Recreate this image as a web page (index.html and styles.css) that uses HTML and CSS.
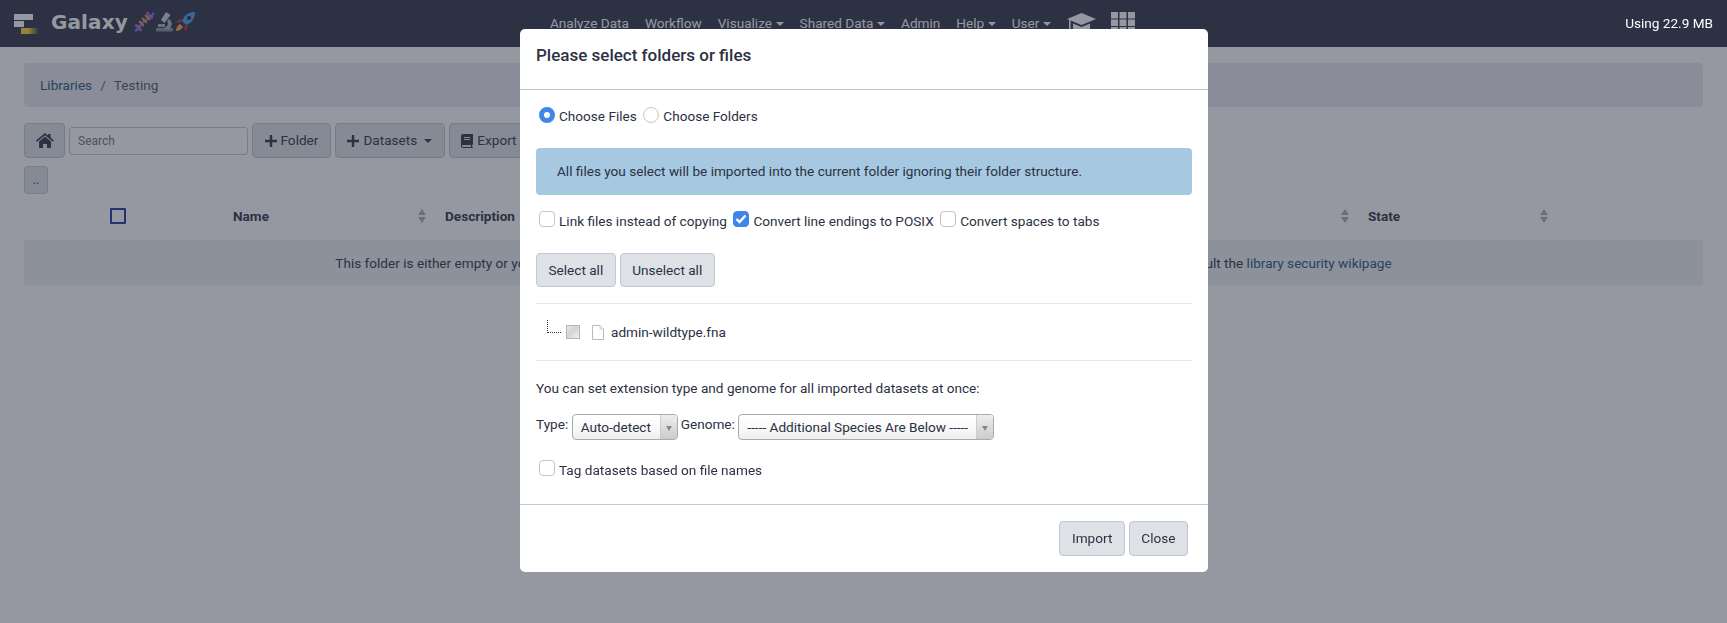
FILE: index.html
```html
<!DOCTYPE html>
<html lang="en">
<head>
<meta charset="utf-8">
<title>Galaxy</title>
<link rel="stylesheet" href="styles.css">
</head>
<body>
<header class="navbar">
  <a class="brand">
    <svg class="logo" width="26" height="22" viewBox="0 0 26 22"><rect x="0" y="0" width="19" height="6" fill="#fff"/><rect x="0" y="7" width="10" height="6" fill="#fff"/><defs><linearGradient id="gold"><stop offset="0.4" stop-color="#ffd52e"/><stop offset="1" stop-color="#ffd52e" stop-opacity="0"/></linearGradient></defs><rect x="7" y="14" width="18" height="6" fill="url(#gold)"/></svg>
    <span class="brand-name">Galaxy</span>
    <span class="emojis">
      <svg width="21" height="21" viewBox="0 0 21 21"><path d="M1 20C5 18 6 14 9 11s8-4 11-9" fill="none" stroke="#4f7fe0" stroke-width="2.6"/><path d="M1 14c3 1 5 3 6 6M13 1c1 3 3 5 6 6" fill="none" stroke="#b45fd6" stroke-width="2.600"/><path d="M5 10l5 5M8 7l5 5M11 4l5 5" stroke="#f0903a" stroke-width="1.800"/></svg>
      <svg width="20" height="21" viewBox="0 0 20 21"><rect x="1" y="17" width="17" height="3.500" rx="1" fill="#7f929e"/><path d="M11 1l4.500 3-6 8-3.500-3z" fill="#c6d3da"/><path d="M14 8a6 6 0 0 1 0 10H8l3-2a4 4 0 0 0 1-6z" fill="#a3b4be"/><rect x="3" y="13" width="7" height="3" fill="#a3b4be"/></svg>
      <svg width="21" height="21" viewBox="0 0 21 21"><path d="M20 1c-6 0-11 3-13 9l4 4c6-2 9-7 9-13z" fill="#4a9be6"/><circle cx="14" cy="7" r="2" fill="#16222e"/><path d="M7 8L3 9l-2 3 5-1zM13 14l-1 4-3 2 1-5z" fill="#e0243c"/><path d="M5 13l3 3c-1 2-4 4-7 4 0-3 2-6 4-7z" fill="#f7ab3a"/></svg>
    </span>
  </a>
  <nav class="nav-links">
    <a>Analyze Data</a>
    <a>Workflow</a>
    <a class="caret">Visualize</a>
    <a class="caret">Shared Data</a>
    <a>Admin</a>
    <a class="caret">Help</a>
    <a class="caret">User</a>
    <svg class="cap" width="29" height="24" viewBox="0 0 29 24"><path d="M14.500 1L29 7l-14.500 6L0 7z" fill="#fff"/><path d="M6 11.500l8.500 3.500 8.500-3.500V20c-3 3-14 3-17 0z" fill="#fff"/><rect x="2" y="8" width="1.600" height="12" fill="#fff"/></svg>
    <svg class="grid-icon" width="24" height="24" viewBox="0 0 24 24"><g fill="#fff"><rect width="7" height="6.500" x="0" y="0"/><rect width="7" height="6.500" x="8.500" y="0"/><rect width="7" height="6.500" x="17" y="0"/><rect width="7" height="6.500" x="0" y="7.500"/><rect width="7" height="6.500" x="8.500" y="7.500"/><rect width="7" height="6.500" x="17" y="7.500"/><rect width="7" height="6.500" x="0" y="15"/><rect width="7" height="6.500" x="8.500" y="15"/><rect width="7" height="6.500" x="17" y="15"/></g></svg>
  </nav>
  <span class="quota">Using 22.9 MB</span>
</header>

<main class="page">
  <div class="crumbs"><a class="link">Libraries</a><span class="sep">/</span><span class="crumb-now">Testing</span></div>
  <div class="toolbar">
    <button class="btn btn-home"><svg width="18" height="15" viewBox="0 0 18 15"><path d="M9 0l3 2.500V1h2.500v3.600L18 7.500l-1 1.200L9 2.200 1 8.700 0 7.500z" fill="#2c3143"/><path d="M9 3.500l6 4.900V14a1 1 0 0 1-1 1h-3v-4H7v4H4a1 1 0 0 1-1-1V8.400z" fill="#2c3143"/></svg></button>
    <input class="search" type="text" placeholder="Search">
    <button class="btn"><svg class="plus" width="12" height="12" viewBox="0 0 12 12"><path d="M4.800 0h2.400v4.800H12v2.400H7.200V12H4.800V7.200H0V4.800h4.800z" fill="#2c3143"/></svg>Folder</button>
    <button class="btn"><svg class="plus" width="12" height="12" viewBox="0 0 12 12"><path d="M4.800 0h2.400v4.800H12v2.400H7.200V12H4.800V7.200H0V4.800h4.800z" fill="#2c3143"/></svg>Datasets<i class="tri"></i></button>
    <button class="btn"><svg class="book" width="12" height="14" viewBox="0 0 12 14"><path d="M2 0h10v10.500l-.8.400v2.200l.8.400V14H2a2 2 0 0 1-2-2V2a2 2 0 0 1 2-2zm1 3v1h6V3zm0 2v1h6V5zm-1 6a1 1 0 0 0 0 2h8v-2z" fill="#2c3143"/></svg>Export</button>
  </div>
  <button class="btn btn-up">..</button>
  <div class="thead">
    <div class="th th-check"><span class="head-box"></span></div>
    <div class="th">Name<i class="sort"></i></div>
    <div class="th">Description<i class="sort"></i></div>
    <div class="th">Data Type<i class="sort"></i></div>
    <div class="th">Size<i class="sort"></i></div>
    <div class="th">Time Updated (UTC)<i class="sort"></i></div>
    <div class="th th-last">State<i class="sort"></i></div>
  </div>
  <div class="empty-row">This folder is either empty or you do not have the proper access permissions to see all the contents. If you expected something else, please consult the <a class="link">library security wikipage</a></div>
</main>

<div class="backdrop"></div>

<section class="modal">
  <header class="modal-head"><h5 class="modal-title">Please select folders or files</h5></header>
  <div class="modal-body">
    <div class="opt-row row-radio">
      <label class="opt"><span class="radio radio-on"></span>Choose Files</label>
      <label class="opt"><span class="radio"></span>Choose Folders</label>
    </div>
    <div class="alert">All files you select will be imported into the current folder ignoring their folder structure.</div>
    <div class="opt-row row-checks">
      <label class="opt"><span class="check"></span>Link files instead of copying</label>
      <label class="opt"><span class="check check-on"><svg width="12" height="10" viewBox="0 0 12 10"><path d="M1.500 5l3 3 6-6.500" fill="none" stroke="#fff" stroke-width="2.400"/></svg></span>Convert line endings to POSIX</label>
      <label class="opt"><span class="check"></span>Convert spaces to tabs</label>
    </div>
    <div class="select-btns">
      <button class="btn btn-lg">Select all</button>
      <button class="btn btn-lg">Unselect all</button>
    </div>
    <div class="tree">
      <span class="tree-line"></span>
      <span class="tree-check"></span>
      <svg class="file" width="12" height="15" viewBox="0 0 12 15"><path d="M.5.5h7.500l3.500 3.500v10.500H.5z" fill="#fff" stroke="#bbb"/><path d="M8 .5V4h3.500" fill="#eee" stroke="#ccc"/></svg>
      <span>admin-wildtype.fna</span>
    </div>
    <p class="hint">You can set extension type and genome for all imported datasets at once:</p>
    <div class="selects">
      <span class="sel-label">Type:</span>
      <div class="sel sel-type"><span class="sel-text">Auto-detect</span><span class="sel-arrow"><i></i></span></div>
      <span class="sel-label">Genome:</span>
      <div class="sel sel-genome"><span class="sel-text">----- Additional Species Are Below -----</span><span class="sel-arrow"><i></i></span></div>
    </div>
    <div class="opt-row row-tag">
      <label class="opt"><span class="check"></span>Tag datasets based on file names</label>
    </div>
  </div>
  <footer class="modal-foot">
    <button class="btn btn-lg">Import</button>
    <button class="btn btn-lg">Close</button>
  </footer>
</section>
</body>
</html>
```
FILE: styles.css
```css
* { box-sizing: border-box; }
html, body { margin: 0; height: 100%; overflow: hidden; }
body {
  font-family: Roboto, "Liberation Sans", sans-serif;
  font-size: 13.6px;
  line-height: 21px;
  color: #2c3143;
  background: #fff;
}
.link { color: #25537b; }

.navbar {
  height: 47px;
  background: #2c3143;
  display: flex;
  align-items: center;
  color: #fff;
}
.brand { display: flex; align-items: center; margin-left: 14px; width: 536px; }
.logo { margin-top: 3px; }
.brand-name {
  font-family: "DejaVu Sans", sans-serif;
  font-weight: 700;
  font-size: 20px;
  letter-spacing: 0.1px;
  margin-left: 11px;
  margin-top: -3px;
}
.emojis { display: flex; margin-left: 6px; gap: 0; margin-top: -5px; }
.nav-links { display: flex; align-items: center; height: 47px; }
.nav-links a { margin-right: 16px; white-space: nowrap; }
.nav-links a.caret::after {
  content: "";
  display: inline-block;
  margin-left: 4px;
  vertical-align: 2px;
  border-top: 4px solid #fff;
  border-left: 4px solid transparent;
  border-right: 4px solid transparent;
}
.nav-links a.caret { margin-right: 15.6px; }
.cap { margin-top: 1px; }
.grid-icon { margin-left: 15px; margin-top: 1px; }
.quota { margin-left: auto; margin-right: 14px; position: relative; z-index: 2; }

.page { padding: 16px 24px; }
.crumbs {
  height: 44px;
  background: #e8e9ee;
  border-radius: 4px;
  padding: 1px 16px 0;
  display: flex;
  align-items: center;
}
.sep { margin: 0 8px; color: #58607a; }
.crumb-now { color: #4b5268; }
.toolbar { display: flex; align-items: center; gap: 4px; margin-top: 16px; height: 35px; }
.btn {
  font: inherit;
  color: #2c3143;
  background: #dee2e6;
  border: 1px solid #bfc8d4;
  border-radius: 4px;
  padding: 0 11.5px;
  height: 35px;
  display: inline-flex;
  align-items: center;
  justify-content: center;
  white-space: nowrap;
}
.btn-home { width: 41px; padding: 0; }
.plus { margin-right: 4px; }
.book { margin-right: 4px; }
.tri {
  display: inline-block;
  margin-left: 7px;
  border-top: 4px solid #2c3143;
  border-left: 4px solid transparent;
  border-right: 4px solid transparent;
}
.search {
  width: 179px;
  height: 28px;
  font: inherit;
  font-size: 12px;
  color: #2c3143;
  border: 1px solid #bfc8d4;
  border-radius: 3px;
  background: #fff;
  padding: 0 8px;
}
.search::placeholder { color: #6c7080; opacity: 1; }
.btn-up { display: flex; width: 24px; height: 28px; padding: 0; margin-top: 8px; font-size: 12px; }
.thead {
  display: grid;
  grid-template-columns: 209px 212px 235px 120px 100px 468px 1fr;
  height: 44px;
  margin-bottom: 2px;
  align-items: center;
  font-weight: 700;
}
.th { display: flex; align-items: center; justify-content: space-between; padding-right: 18px; }
.th-check { justify-content: flex-start; padding: 0 0 0 86px; }
.th-last { padding-right: 154px; }
.head-box { width: 16px; height: 16px; border: 2px solid #25319a; border-radius: 1px; }
.sort { display: block; width: 9px; height: 14px; position: relative; }
.sort::before, .sort::after {
  content: "";
  position: absolute;
  left: 0;
  border-left: 4.5px solid transparent;
  border-right: 4.5px solid transparent;
}
.sort::before { top: 0; border-bottom: 6px solid #a8aab6; }
.sort::after { bottom: 0; border-top: 6px solid #a8aab6; }
.empty-row {
  height: 45px;
  background: #eff0f2;
  text-align: center;
  line-height: 46px;
}

.backdrop { position: fixed; inset: 0; background: #2c3143; opacity: .5; z-index: 1; }

.modal {
  position: fixed;
  left: 520px;
  top: 29px;
  width: 688px;
  height: 543px;
  background: #fff;
  border-radius: 5px;
  z-index: 3;
  display: flex;
  flex-direction: column;
}
.modal-head { height: 61px; border-bottom: 1px solid #bfc8d4; padding: 14px 16px 0; }
.modal-title { margin: 0; font-size: 17px; line-height: 25px; font-weight: 500; }
.modal-body { padding: 0 16px; height: 415px; border-bottom: 1px solid #bfc8d4; }
.opt-row { display: flex; height: 21px; padding-left: 3px; gap: 6.5px; }
.row-radio { margin-top: 16px; }
.row-checks { margin-top: 16px; }
.row-tag { margin-top: 20px; }
.opt { display: flex; white-space: nowrap; }
.radio, .check {
  width: 16px;
  height: 16px;
  background: #fff;
  border: 1px solid #c9c3bc;
  margin-right: 4px;
  flex: none;
}
.radio { border-radius: 50%; margin-top: 1px; }
.radio-on { border: 5px solid #3e86ea; }
.check { border-radius: 4px; }
.check-on { background: #3e86ea; border-color: #3e86ea; display: flex; align-items: center; justify-content: center; }
.alert {
  margin-top: 21px;
  height: 47px;
  background: #a6c8e1;
  border-radius: 4px;
  padding: 0 21px;
  display: flex;
  align-items: center;
}
.select-btns { display: flex; gap: 4px; margin-top: 21px; }
.btn-lg { height: 34px; }
.tree {
  display: flex;
  align-items: center;
  height: 58px;
  margin-top: 16px;
  border-top: 1px solid #e6e7ea;
  border-bottom: 1px solid #e6e7ea;
  padding-left: 11px;
}
.tree-line {
  width: 14px;
  height: 13px;
  border-left: 1px dotted #333;
  border-bottom: 1px dotted #333;
  margin-top: -11px;
}
.tree-check {
  width: 14px;
  height: 14px;
  margin-left: 5px;
  border: 1px solid #b5b5b5;
  background: linear-gradient(135deg, #e6e6e6, #d4d4d4 45%, #f0f0f0);
}
.file { margin-left: 12px; margin-right: 7px; }
.hint { margin: 17px 0 0; }
.selects { display: flex; align-items: flex-start; margin-top: 15px; height: 26px; }
.sel-label { margin-right: 3.5px; }
.sel {
  height: 26px;
  display: flex;
  border: 1px solid #aaa;
  border-radius: 4px;
  background: linear-gradient(#fff, #f8f8f8 60%, #eee);
  margin-right: 3px;
  line-height: 24px;
  overflow: hidden;
}
.sel-type { width: 106px; }
.sel-genome { width: 256px; margin-right: 0; }
.sel-text { flex: 1; padding-left: 8px; white-space: nowrap; }
.sel-arrow {
  width: 17px;
  border-left: 1px solid #ccc;
  background: linear-gradient(#eee, #ccc);
  display: flex;
  align-items: center;
  justify-content: center;
}
.sel-arrow i {
  margin-top: 3px;
  border-top: 5px solid #888;
  border-left: 3px solid transparent;
  border-right: 3px solid transparent;
}
.modal-foot { display: flex; justify-content: flex-end; gap: 4px; padding: 16px 20px 0; }
.modal-foot .btn { height: 35px; }
```
